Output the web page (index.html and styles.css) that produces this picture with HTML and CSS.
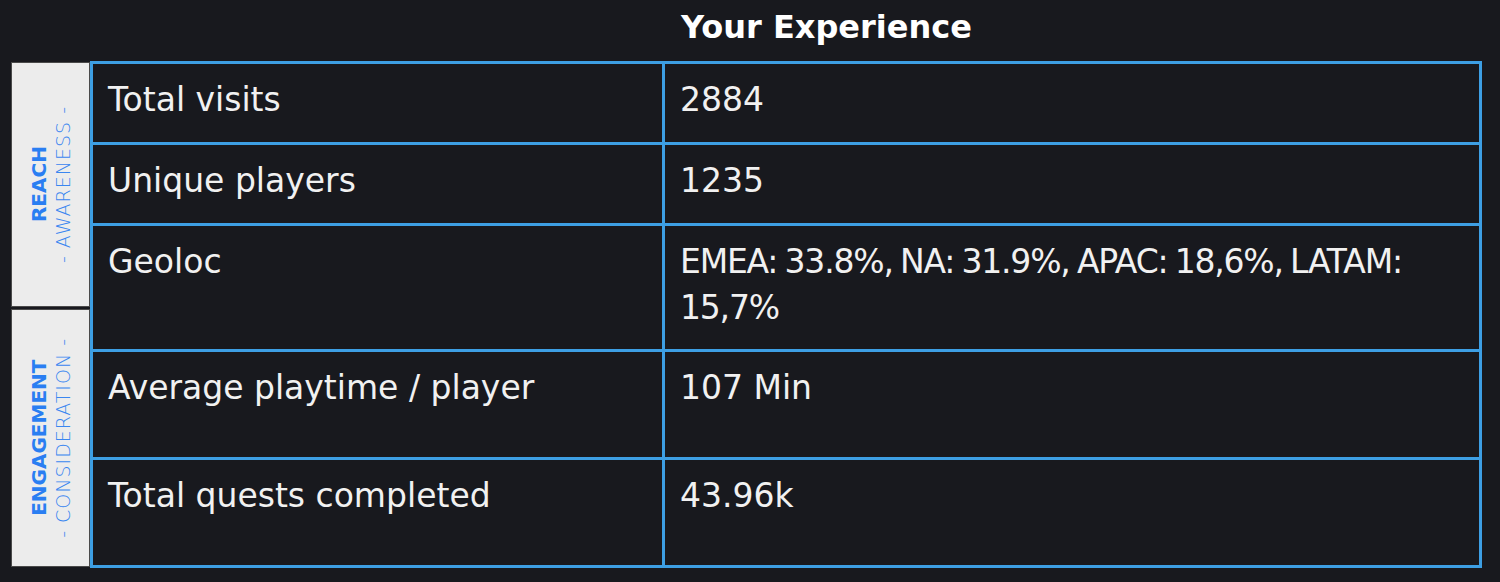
FILE: index.html
```html
<!DOCTYPE html>
<html>
  <head>
    <link rel="stylesheet" href="styles.css">
  </head>
  <body>
    <div class="page">
      <div class="header">
        <div class="header-spacer"></div>
        <h1 class="title">Your Experience</h1>
      </div>

      <div class="board">
        <div class="stages">
          <div class="stage stage-reach">
            <div class="stage-text">
              <span class="stage-name">REACH</span>
              <span class="stage-sub">- AWARENESS -</span>
            </div>
          </div>
          <div class="stage stage-engagement">
            <div class="stage-text">
              <span class="stage-name">ENGAGEMENT</span>
              <span class="stage-sub">- CONSIDERATION -</span>
            </div>
          </div>
        </div>

        <table class="stats">
          <tr class="row-short">
            <td class="label">Total visits</td>
            <td class="value">2884</td>
          </tr>
          <tr class="row-short">
            <td class="label">Unique players</td>
            <td class="value">1235</td>
          </tr>
          <tr class="row-geo">
            <td class="label">Geoloc</td>
            <td class="value value-geo">EMEA: 33.8%, NA: 31.9%, APAC: 18,6%, LATAM: 15,7%</td>
          </tr>
          <tr class="row-tall">
            <td class="label">Average playtime / player</td>
            <td class="value">107 Min</td>
          </tr>
          <tr class="row-tall">
            <td class="label">Total quests completed</td>
            <td class="value">43.96k</td>
          </tr>
        </table>
      </div>
    </div>
  </body>
</html>
```

FILE: styles.css
```css
body {
  margin: 0;
  background: #18191e;
  color: #f1f1f1;
  font-family: "DejaVu Sans", "Noto Sans", sans-serif;
}

.page {
  width: 1500px;
  height: 582px;
  padding-left: 11px;
  box-sizing: border-box;
}

/* Title row */
.header {
  display: flex;
  height: 62px;
}

.header-spacer {
  width: 670px;
  flex: none;
}

.title {
  margin: 0;
  padding-top: 8px;
  font-size: 32px;
  font-weight: 700;
  color: #fff;
}

/* Body */
.board {
  display: flex;
}

.stages {
  width: 79px;
  flex: none;
  display: flex;
  flex-direction: column;
  gap: 2px;
}

.stage {
  background: #ececec;
  border: 1px solid #4a4a4a;
  box-sizing: border-box;
  display: flex;
  justify-content: center;
  align-items: center;
}

.stage-reach {
  height: 245px;
}

.stage-engagement {
  height: 258px;
}

.stage-text {
  writing-mode: vertical-rl;
  transform: rotate(180deg);
  display: flex;
  flex-direction: column;
  align-items: center;
  gap: 2px;
  line-height: 22px;
}

.stage-name {
  font-size: 20px;
  font-weight: 700;
  color: #2a7ef2;
}

.stage-sub {
  font-size: 19px;
  font-weight: 200;
  color: #3a86f0;
  letter-spacing: 1px;
}

/* Stats table */
.stats {
  width: 1392px;
  border-collapse: collapse;
  margin-top: -1px;
}

.stats td {
  border: 3px solid #3d9fe4;
  vertical-align: top;
  padding: 13px 10px 0 15px;
  font-size: 33px;
  line-height: 46px;
}

.stats .label {
  width: 544px;
}

.stats .value {
  padding-left: 15px;
}

.stats .value-geo {
  letter-spacing: -1.2px;
  word-spacing: -2px;
}

.row-short {
  height: 81px;
}

.row-geo {
  height: 126px;
}

.row-tall {
  height: 108px;
}
```
